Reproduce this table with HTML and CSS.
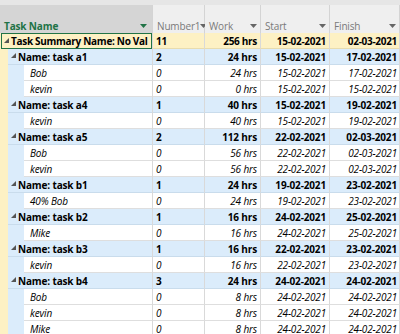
FILE: index.html
```html
<!DOCTYPE html>
<html>
<head>
<meta charset="utf-8">
<link rel="stylesheet" href="styles.css">
</head>
<body>
<div class="sheet">
  <div class="head">
    <div class="hc c-name sel"><span class="lbl">Task Name</span><svg class="dd" width="7" height="4" viewBox="0 0 7 4"><polygon points="0,0 7,0 3.5,4"/></svg></div>
    <div class="hc c-num"><span class="lbl">Number1</span><svg class="dd" width="7" height="4" viewBox="0 0 7 4"><polygon points="0,0 7,0 3.5,4"/></svg></div>
    <div class="hc c-work"><span class="lbl">Work</span><svg class="dd" width="7" height="4" viewBox="0 0 7 4"><polygon points="0,0 7,0 3.5,4"/></svg></div>
    <div class="hc c-start"><span class="lbl">Start</span><svg class="dd" width="7" height="4" viewBox="0 0 7 4"><polygon points="0,0 7,0 3.5,4"/></svg></div>
    <div class="hc c-fin"><span class="lbl">Finish</span><svg class="dd" width="7" height="4" viewBox="0 0 7 4"><polygon points="0,0 7,0 3.5,4"/></svg></div>
  </div>
  <div id="rows"></div>
</div>
<script src="app.js"></script>
</body>
</html>
```
FILE: app.js
```js
const data = [
  ["s","Task Summary Name: No Val","11","256 hrs","15-02-2021","02-03-2021"],
  ["t","Name: task a1","2","24 hrs","15-02-2021","17-02-2021"],
  ["a","Bob","0","24 hrs","15-02-2021","17-02-2021"],
  ["a","kevin","0","0 hrs","15-02-2021","15-02-2021"],
  ["t","Name: task a4","1","40 hrs","15-02-2021","19-02-2021"],
  ["a","kevin","0","40 hrs","15-02-2021","19-02-2021"],
  ["t","Name: task a5","2","112 hrs","22-02-2021","02-03-2021"],
  ["a","Bob","0","56 hrs","22-02-2021","02-03-2021"],
  ["a","kevin","0","56 hrs","22-02-2021","02-03-2021"],
  ["t","Name: task b1","1","24 hrs","19-02-2021","23-02-2021"],
  ["a","40% Bob","0","24 hrs","19-02-2021","23-02-2021"],
  ["t","Name: task b2","1","16 hrs","24-02-2021","25-02-2021"],
  ["a","Mike","0","16 hrs","24-02-2021","25-02-2021"],
  ["t","Name: task b3","1","16 hrs","22-02-2021","23-02-2021"],
  ["a","kevin","0","16 hrs","22-02-2021","23-02-2021"],
  ["t","Name: task b4","3","24 hrs","24-02-2021","24-02-2021"],
  ["a","Bob","0","8 hrs","24-02-2021","24-02-2021"],
  ["a","kevin","0","8 hrs","24-02-2021","24-02-2021"],
  ["a","Mike","0","8 hrs","24-02-2021","24-02-2021"]
];
const tri = '<svg class="tri" width="5" height="5" viewBox="0 0 5 5"><polygon points="5,0 5,5 0,5"/></svg>';
const cls = {s:"sum", t:"task", a:"asg"};
let html = "";
for (const [k,name,n,w,s,f] of data) {
  let ind = "";
  if (k === "t") ind = '<span class="ind y"></span>';
  if (k === "a") ind = '<span class="ind y"></span><span class="ind b"></span>';
  const t = k === "a" ? "" : tri;
  html += `<div class="row ${cls[k]}">
    <div class="c c-name">${ind}<div class="nm">${t}<span class="txt">${name}</span></div></div>
    <div class="c c-num">${n}</div>
    <div class="c c-work r">${w}</div>
    <div class="c c-start r">${s}</div>
    <div class="c c-fin r">${f}</div>
  </div>`;
}
document.getElementById("rows").innerHTML = html;
```
FILE: styles.css
```css
* { box-sizing: border-box; }
body {
  margin: 0;
  background: #ffffff;
  font-family: "Open Sans", "Noto Sans", sans-serif;
  font-size: 10px;
  color: #000;
  overflow: hidden;
}
.sheet { width: 420px; }
.head {
  display: flex;
  height: 33px;
  padding-top: 5px;
  background: #e6e6e6;
}
.hc {
  display: flex;
  align-items: center;
  justify-content: space-between;
  padding: 14px 3px 0 4px;
  background: #efefef;
  border-right: 1px solid #d4d4d4;
  color: #7a7a7a;
  font-size: 10px;
  letter-spacing: -0.15px;
}
.hc.sel { background: #d5d5d5; color: #217346; font-weight: bold; }
.dd { fill: #666; flex: none; }
.hc.sel .dd { fill: #217346; }
.c-name { width: 153px; flex: none; }
.c-num { width: 52px; flex: none; }
.c-work { width: 56px; flex: none; }
.c-start { width: 69px; flex: none; }
.c-fin { width: 70px; flex: none; }
.hc.c-name { padding-left: 4px; padding-right: 5px; }

.row {
  display: flex;
  height: 16px;
}
.c {
  display: flex;
  align-items: center;
  height: 16px;
  border-right: 1px solid #d9d9d9;
  border-bottom: 1px solid #dedede;
  padding: 0 3px;
  white-space: nowrap;
  overflow: hidden;
  letter-spacing: -0.15px;
}
.c.r { justify-content: flex-end; padding-right: 3px; }
.c.c-fin { padding-right: 2px; }
.c.c-name { padding: 0; border-bottom: none; }
.ind { width: 8px; height: 16px; flex: none; }
.ind.y { background: #fdf1c4; }
.ind.b { background: #dbecfb; width: 16px; border-bottom: 1px solid #dbecfb; }
.nm {
  flex: 1;
  height: 16px;
  display: flex;
  align-items: center;
  border-bottom: 1px solid #dedede;
  padding-left: 3px;
  overflow: hidden;
}
.tri { fill: #555; flex: none; margin-right: 2px; margin-top: -2px; }
.sum { background: #fdf1c4; font-weight: bold; }
.sum .c { letter-spacing: -0.3px; }
.sum .nm { border: 1px solid #217346; padding-left: 2px; margin-left: 1px; }
.sum .c { border-bottom-color: #e8dcae; }
.task .c { background: #dbecfb; font-weight: bold; border-bottom-color: #c9dcec; }
.task .c.c-name { background: transparent; }
.task .nm { background: #dbecfb; border-bottom-color: #c9dcec; }
.asg .c { font-style: italic; }
.asg .nm { padding-left: 6px; }
```
